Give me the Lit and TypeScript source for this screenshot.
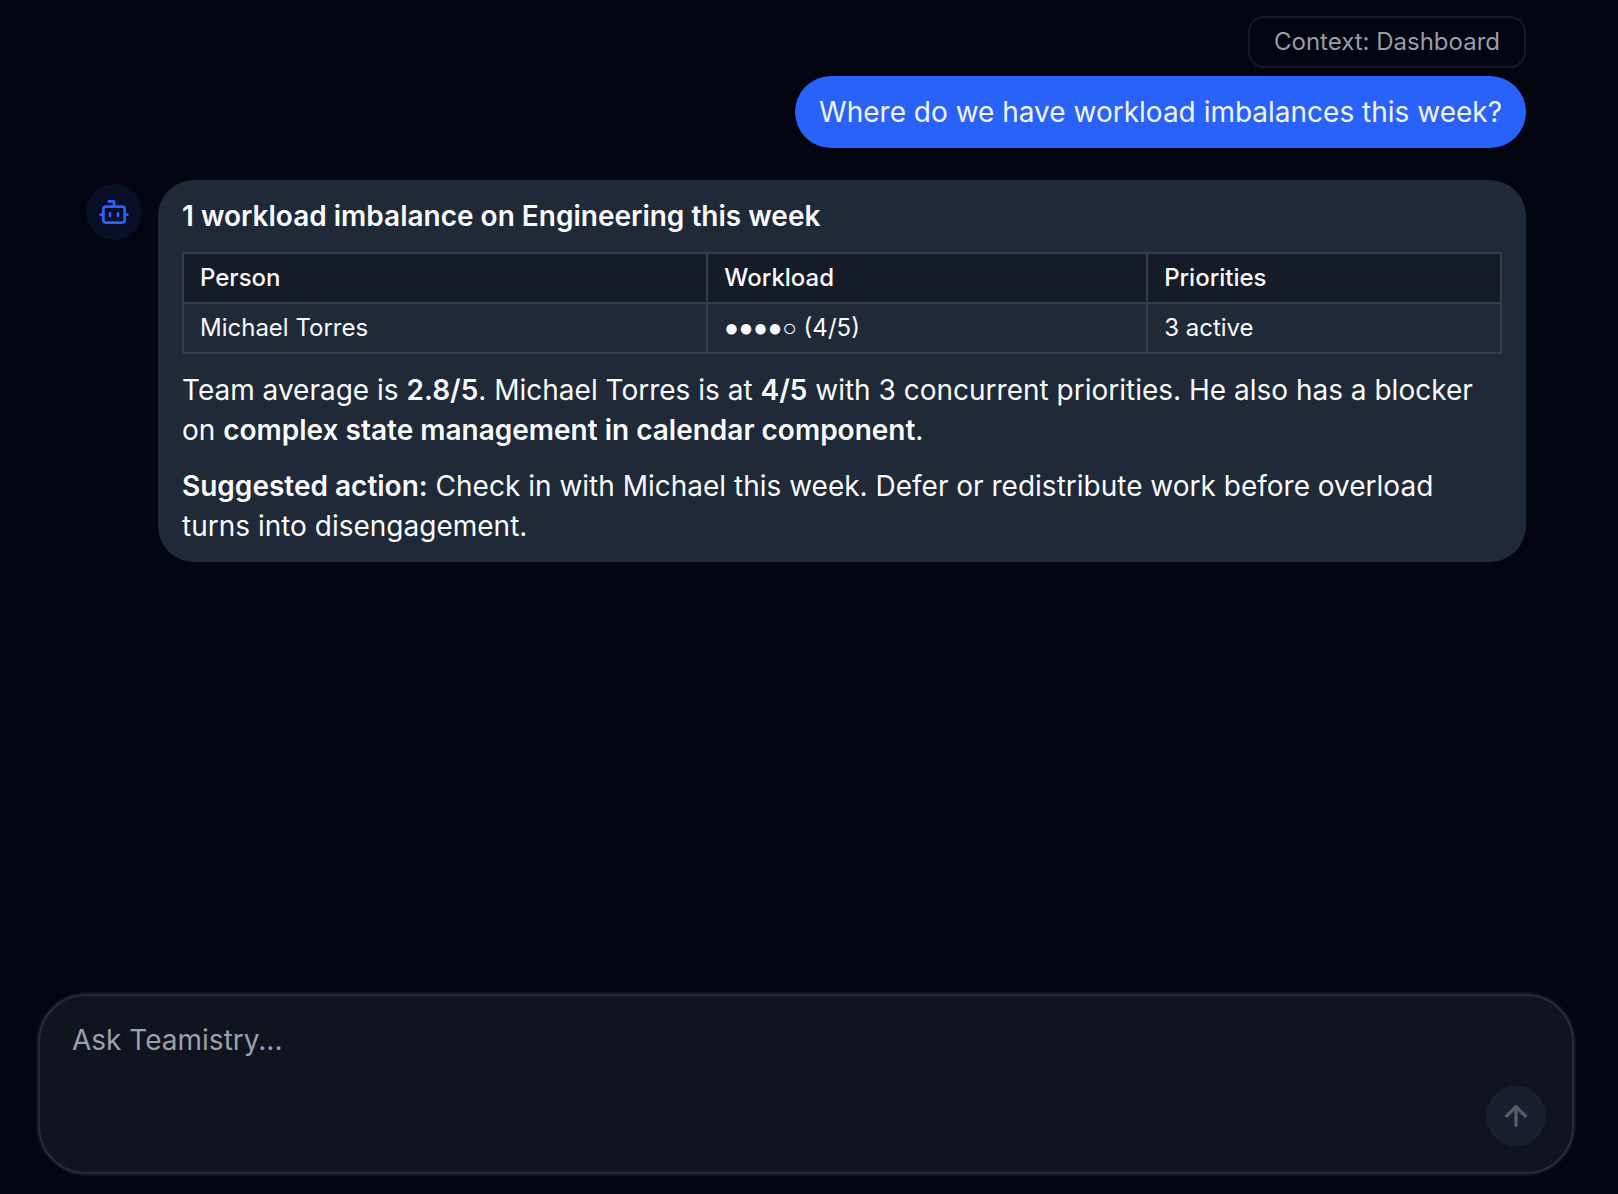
import { LitElement, html, css } from "lit";
import { customElement } from "lit/decorators.js";

interface WorkloadRow {
  person: string;
  load: number;
  priorities: string;
}

const ROWS: WorkloadRow[] = [{ person: "Michael Torres", load: 4, priorities: "3 active" }];
const MAX_LOAD = 5;

@customElement("workload-table")
export class WorkloadTable extends LitElement {
  static styles = css`
    :host {
      display: block;
    }
    .table {
      width: 100%;
      border-collapse: collapse;
      font-size: 24px;
      line-height: 32px;
    }
    .cell {
      border: 2px solid #363e4b;
      padding: 8px 16px;
      text-align: left;
      font-weight: 400;
    }
    .head {
      background: #161b28;
      font-weight: 500;
    }
    .dots {
      font-family: "Liberation Sans", sans-serif;
      line-height: 1;
    }
  `;

  render() {
    return html`
      <table class="table">
        <thead>
          <tr>
            <th class="cell head" scope="col">Person</th>
            <th class="cell head" scope="col">Workload</th>
            <th class="cell head" scope="col">Priorities</th>
          </tr>
        </thead>
        <tbody>
          ${ROWS.map(
            (r) => html`<tr>
              <td class="cell">${r.person}</td>
              <td class="cell"><span class="dots">${"●".repeat(r.load)}${"○".repeat(MAX_LOAD - r.load)}</span> (${r.load}/${MAX_LOAD})</td>
              <td class="cell">${r.priorities}</td>
            </tr>`
          )}
        </tbody>
      </table>
    `;
  }
}

@customElement("chat-composer")
export class ChatComposer extends LitElement {
  static styles = css`
    :host {
      display: block;
    }
    .box {
      display: flex;
      align-items: flex-end;
      box-sizing: border-box;
      min-height: 180px;
      padding: 24px 26px 26px 32px;
      border: 2px solid #282b36;
      border-radius: 48px;
      background: #10141f;
      box-shadow: 0 0 0 2px #0f121c;
    }
    .input {
      flex: 1;
      align-self: stretch;
      min-width: 0;
      padding: 0;
      border: 0;
      outline: 0;
      resize: none;
      background: transparent;
      color: #f9fafb;
      font: inherit;
    }
    .input::placeholder {
      color: #9b9fac;
      opacity: 1;
    }
    .send {
      display: flex;
      align-items: center;
      justify-content: center;
      width: 60px;
      height: 60px;
      padding: 0;
      border: 0;
      border-radius: 50%;
      background: #18202d;
      color: #585d69;
    }
    .arrow {
      width: 32px;
      height: 32px;
    }
  `;

  render() {
    return html`
      <form class="box" @submit=${(e: Event) => e.preventDefault()}>
        <textarea class="input" rows="2" aria-label="Ask Teamistry" placeholder="Ask Teamistry..."></textarea>
        <button class="send" type="submit" aria-label="Send">
          <svg class="arrow" viewBox="0 0 24 24" fill="none" stroke="currentColor" stroke-width="2.5" stroke-linecap="round" stroke-linejoin="round" aria-hidden="true">
            <path d="m5 12 7-7 7 7" />
            <path d="M12 19V5" />
          </svg>
        </button>
      </form>
    `;
  }
}

@customElement("app-root")
export class AppRoot extends LitElement {
  static styles = css`
    :host {
      display: flex;
      flex-direction: column;
      box-sizing: border-box;
      min-height: 100vh;
      padding: 16px 44px 20px 38px;
      background: #030510;
      color: #f9fafb;
      font-family: Inter, "Liberation Sans", sans-serif;
      font-size: 28px;
      line-height: 40px;
    }
    .thread {
      flex: 1;
      display: flex;
      flex-direction: column;
      gap: 32px;
      padding: 0 48px;
    }
    .question {
      display: flex;
      flex-direction: column;
      align-items: flex-end;
      gap: 8px;
    }
    .context {
      padding: 8px 24px;
      border: 2px solid #171a25;
      border-radius: 16px;
      color: #989ca9;
      font-size: 24px;
      line-height: 32px;
    }
    .bubble {
      padding: 16px 24px;
      border-radius: 36px;
      background: #2962f8;
      color: #eff4ff;
    }
    .answer {
      display: flex;
      align-items: flex-start;
      gap: 16px;
    }
    .avatar {
      display: flex;
      flex: none;
      align-items: center;
      justify-content: center;
      width: 56px;
      height: 56px;
      margin-top: 4px;
      border-radius: 50%;
      background: #070e25;
      color: #2962f8;
    }
    .bot {
      width: 32px;
      height: 32px;
    }
    .card {
      flex: 1;
      display: flex;
      flex-direction: column;
      gap: 16px;
      min-width: 0;
      padding: 16px 24px;
      border-radius: 36px;
      background: #202937;
    }
    .title,
    .text {
      margin: 0;
      font-size: 28px;
    }
    .title,
    .strong {
      font-weight: 600;
    }
  `;

  render() {
    return html`
      <main class="thread">
        <section class="question">
          <div class="context">Context: Dashboard</div>
          <div class="bubble">Where do we have workload imbalances this week?</div>
        </section>
        <section class="answer">
          <div class="avatar">
            <svg class="bot" viewBox="0 0 24 24" fill="none" stroke="currentColor" stroke-width="2" stroke-linecap="round" stroke-linejoin="round" aria-hidden="true">
              <path d="M12 8V4H8" />
              <rect width="16" height="12" x="4" y="8" rx="2" />
              <path d="M2 14h2" />
              <path d="M20 14h2" />
              <path d="M15 13v2" />
              <path d="M9 13v2" />
            </svg>
          </div>
          <article class="card">
            <h2 class="title">1 workload imbalance on Engineering this week</h2>
            <workload-table></workload-table>
            <p class="text">
              Team average is <strong class="strong">2.8/5</strong>. Michael Torres is at
              <strong class="strong">4/5</strong> with 3 concurrent priorities. He also has a blocker on
              <strong class="strong">complex state management in calendar component</strong>.
            </p>
            <p class="text">
              <strong class="strong">Suggested action:</strong> Check in with Michael this week. Defer or redistribute
              work before overload turns into disengagement.
            </p>
          </article>
        </section>
      </main>
      <chat-composer></chat-composer>
    `;
  }
}
